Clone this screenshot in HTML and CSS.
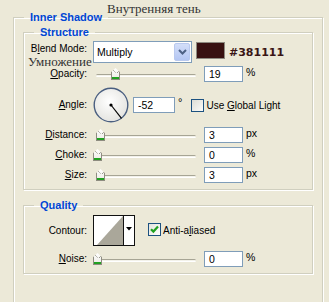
FILE: index.html
```html
<!DOCTYPE html>
<html>
<head>
  <meta charset="UTF-8">
  <title>Inner Shadow</title>
  <link rel="stylesheet" href="styles.css">
</head>
<body>

  <div class="panel">
    <fieldset class="group outer">
      <legend>Inner Shadow</legend>

      <fieldset class="group structure">
        <legend>Structure</legend>

        <div class="row row-blend">
          <span class="lbl">B<u>l</u>end Mode:</span>
          <div class="ctl">
            <div class="select">
              <span class="select-text">Multiply</span>
              <span class="select-btn">
                <svg width="9" height="6" viewBox="0 0 9 6"><path d="M1 1 L4.5 4.5 L8 1" fill="none" stroke="#4d6185" stroke-width="2"/></svg>
              </span>
            </div>
            <span class="swatch"></span>
            <span class="hex">#381111</span>
          </div>
        </div>

        <div class="row row-field">
          <span class="lbl"><u>O</u>pacity:</span>
          <div class="ctl">
            <div class="slider"><span class="track"></span><span class="thumb" style="left: 18px"></span></div>
            <span class="input">19</span>
            <span class="unit">%</span>
          </div>
        </div>

        <div class="row row-angle">
          <span class="lbl"><u>A</u>ngle:</span>
          <div class="ctl">
            <svg class="dial" width="36" height="36" viewBox="0 0 36 36">
              <defs>
                <radialGradient id="dialFill" cx="45%" cy="40%" r="60%">
                  <stop offset="0" stop-color="#ffffff"/>
                  <stop offset="1" stop-color="#e4e4e0"/>
                </radialGradient>
              </defs>
              <circle cx="18" cy="18" r="16.8" fill="url(#dialFill)" stroke="#4a5f80" stroke-width="1.4"/>
              <line x1="18" y1="18" x2="28.5" y2="31.4" stroke="#000" stroke-width="1.2"/>
              <circle cx="18" cy="18" r="1.6" fill="#000"/>
            </svg>
            <span class="input input-angle">-52</span>
            <span class="degree">&deg;</span>
            <span class="check"></span>
            <span class="check-text">Use <u>G</u>lobal Light</span>
          </div>
        </div>

        <div class="row row-field">
          <span class="lbl"><u>D</u>istance:</span>
          <div class="ctl">
            <div class="slider"><span class="track"></span><span class="thumb" style="left: 3px"></span></div>
            <span class="input">3</span>
            <span class="unit">px</span>
          </div>
        </div>

        <div class="row row-field">
          <span class="lbl"><u>C</u>hoke:</span>
          <div class="ctl">
            <div class="slider"><span class="track"></span><span class="thumb" style="left: 0px"></span></div>
            <span class="input">0</span>
            <span class="unit">%</span>
          </div>
        </div>

        <div class="row row-field">
          <span class="lbl"><u>S</u>ize:</span>
          <div class="ctl">
            <div class="slider"><span class="track"></span><span class="thumb" style="left: 3px"></span></div>
            <span class="input">3</span>
            <span class="unit">px</span>
          </div>
        </div>
      </fieldset>

      <fieldset class="group quality">
        <legend>Quality</legend>

        <div class="row row-contour">
          <span class="lbl">Contour:</span>
          <div class="ctl">
            <div class="contour">
              <svg class="contour-preview" width="29" height="29" viewBox="0 0 29 29">
                <rect width="29" height="29" fill="#fff"/>
                <polygon points="3,29 29,0 29,29" fill="#aaa79a"/>
              </svg>
              <span class="contour-btn">
                <svg width="6" height="4" viewBox="0 0 6 4"><polygon points="0,0 6,0 3,3.5" fill="#000"/></svg>
              </span>
            </div>
            <span class="check checked">
              <svg width="11" height="11" viewBox="0 0 11 11"><path d="M2 5.2 L4.4 7.6 L9 2.6" fill="none" stroke="#21a121" stroke-width="2.2"/></svg>
            </span>
            <span class="check-text">Anti-a<u>l</u>iased</span>
          </div>
        </div>

        <div class="row row-field">
          <span class="lbl"><u>N</u>oise:</span>
          <div class="ctl">
            <div class="slider"><span class="track"></span><span class="thumb" style="left: 0px"></span></div>
            <span class="input">0</span>
            <span class="unit">%</span>
          </div>
        </div>
      </fieldset>
    </fieldset>

    <div class="note note-title">Внутренняя тень</div>
    <div class="note note-blend">Умножение</div>
  </div>

</body>
</html>
```

FILE: styles.css
```css
body {
  margin: 0;
  padding: 0;
  background-color: #ece9d8;
  font-family: "Liberation Sans", Arial, sans-serif;
  font-size: 10px;
  color: #000;
  overflow: hidden;
}
*, *:before, *:after {
  box-sizing: border-box;
}

.panel {
  position: relative;
  height: 302px;
  padding: 11px 6px 0 13px;
}

/* etched group boxes */
.group {
  margin: 0;
  padding: 0 9px 0 0;
  border: 1px solid #d0cfbf;
  box-shadow: inset 1px 1px 0 #fff, 1px 1px 0 #fff;
}
.group legend {
  margin-left: 10px;
  padding: 0 6px;
  font-size: 11px;
  line-height: 13px;
  font-weight: bold;
  color: #0046d5;
}
.outer {
  padding: 0 9px 60px 9px;
}
.outer > legend {
  margin-left: 1px;
}
.structure {
  margin-top: 2px;
  padding: 2px 0 6px 0;
}
.quality {
  margin-top: 9px;
  padding: 3px 0 6px 0;
}

/* rows */
.row {
  display: grid;
  grid-template-columns: 63px 1fr;
  column-gap: 6px;
  align-items: center;
}
.row + .row {
  margin-top: 4px;
}
.row-blend { height: 22px; }
.row-blend .lbl {
  align-self: start;
  margin-top: 2px;
}
.structure .row-blend + .row { margin-top: 3px; }
.row-field { height: 16px; }
.row-angle { height: 36px; margin-top: 5px !important; }
.row-contour { height: 31px; }
.quality .row-contour + .row { margin-top: 5px; }

.lbl {
  text-align: right;
  white-space: nowrap;
  line-height: 12px;
}
u {
  text-underline-offset: 1px;
}
.ctl {
  display: flex;
  align-items: center;
  height: 100%;
}

/* blend mode */
.select {
  width: 99px;
  height: 22px;
  border: 1px solid #7f9db9;
  background: #fff;
  display: flex;
  align-items: center;
  justify-content: space-between;
  padding: 1px;
}
.select-text {
  padding-left: 2px;
  font-size: 10.5px;
}
.select-btn {
  width: 16px;
  height: 18px;
  border: 1px solid #b9c9ef;
  border-radius: 2px;
  background: linear-gradient(#d3def9, #b4c6f3);
  display: flex;
  align-items: center;
  justify-content: center;
}
.swatch {
  width: 29px;
  height: 17px;
  margin-left: 4px;
  align-self: flex-start;
  margin-top: 1px;
  background: #381111;
  border: 1px solid #8d8a80;
}
.hex {
  margin-left: 4px;
  font-family: "DejaVu Sans", sans-serif;
  font-weight: bold;
  font-size: 11px;
  color: #3a1515;
}

/* sliders */
.slider {
  position: relative;
  width: 103px;
  height: 16px;
}
.track {
  display: block;
  margin: 8px 0 0 3px;
  height: 3px;
  border-top: 1px solid #a7a595;
  border-bottom: 1px solid #fff;
  border-radius: 2px;
  background: #f3f2ea;
}
.thumb {
  position: absolute;
  top: 2px;
  width: 9px;
  height: 12px;
  background:
    linear-gradient(#21a121, #21a121) bottom / 100% 2px no-repeat,
    linear-gradient(#ffffff, #ecebe5);
  border: 1px solid #8e8c80;
  border-top: none;
  clip-path: polygon(50% 0, 100% 35%, 100% 100%, 0 100%, 0 35%);
}
.thumb:before {
  content: '';
  position: absolute;
  left: -1px;
  top: 0;
  width: 11px;
  height: 5px;
  background: linear-gradient(to bottom right, transparent 45%, #8e8c80 50%, transparent 58%) right / 50% 100% no-repeat,
    linear-gradient(to bottom left, transparent 45%, #8e8c80 50%, transparent 58%) left / 50% 100% no-repeat;
}

.input {
  width: 39px;
  height: 16px;
  margin-left: 8px;
  border: 1px solid #7f9db9;
  background: #fff;
  padding-left: 4px;
  line-height: 14px;
  font-size: 10.5px;
}
.unit {
  margin-left: 3px;
  margin-top: -4px;
  font-size: 10.5px;
}

/* angle */
.dial {
  display: block;
}
.input-angle {
  width: 42px;
  margin-left: 4px;
}
.degree {
  margin-left: 3px;
  margin-top: -6px;
  font-size: 11px;
}
.check {
  width: 13px;
  height: 13px;
  margin-left: 9px;
  border: 1px solid #1c5180;
  background: linear-gradient(135deg, #dcdcd5, #fbfbf9);
  display: flex;
  align-items: center;
  justify-content: center;
}
.check-text {
  margin-left: 2px;
  font-size: 10px;
  white-space: nowrap;
}

/* contour */
.contour {
  width: 42px;
  height: 31px;
  border: 1px solid #111;
  display: flex;
  background: #fff;
}
.contour-preview {
  display: block;
}
.contour-btn {
  width: 11px;
  border-left: 1px solid #111;
  display: flex;
  justify-content: center;
  padding-top: 11px;
}
.quality .check {
  margin-left: 13px;
  margin-top: -2px;
  background: linear-gradient(135deg, #e3e3dc, #ffffff);
}

/* translation notes laid over the dialog */
.note {
  position: absolute;
  font-family: "Liberation Serif", "Times New Roman", serif;
  font-size: 13px;
  line-height: 12px;
  color: #333;
  white-space: nowrap;
}
.note-title {
  left: 107px;
  top: 3px;
}
.note-blend {
  left: 28px;
  top: 56px;
}
```
